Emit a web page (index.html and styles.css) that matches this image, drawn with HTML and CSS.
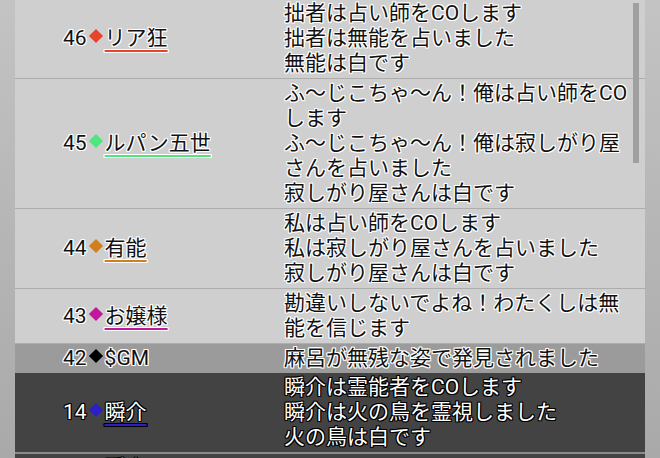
FILE: index.html
```html
<!DOCTYPE html>
<html>
<head>
    <meta http-equiv="Content-Type" content="text/html; charset=utf-8" />
    <title>ログ</title>
    <link rel="stylesheet" href="styles.css">
</head>
<body>
<div class="log">
    <div class="row">
        <div class="who"><span class="no">46</span><span class="mark red"></span><span class="name red">リア狂</span></div>
        <div class="msg">拙者は占い師をCOします<br>拙者は無能を占いました<br>無能は白です</div>
    </div>
    <div class="row">
        <div class="who"><span class="no">45</span><span class="mark green"></span><span class="name green">ルパン五世</span></div>
        <div class="msg">ふ〜じこちゃ〜ん！俺は占い師をCOします<br>ふ〜じこちゃ〜ん！俺は寂しがり屋さんを占いました<br>寂しがり屋さんは白です</div>
    </div>
    <div class="row">
        <div class="who"><span class="no">44</span><span class="mark orange"></span><span class="name orange">有能</span></div>
        <div class="msg">私は占い師をCOします<br>私は寂しがり屋さんを占いました<br>寂しがり屋さんは白です</div>
    </div>
    <div class="row">
        <div class="who"><span class="no">43</span><span class="mark pink"></span><span class="name pink">お嬢様</span></div>
        <div class="msg">勘違いしないでよね！わたくしは無能を信じます</div>
    </div>
    <div class="row gm">
        <div class="who"><span class="no">42</span><span class="mark black"></span><span class="plain">$GM</span></div>
        <div class="msg">麻呂が無残な姿で発見されました</div>
    </div>
    <div class="row dark">
        <div class="who"><span class="no">14</span><span class="mark blue"></span><span class="name blue">瞬介</span></div>
        <div class="msg">瞬介は霊能者をCOします<br>瞬介は火の鳥を霊視しました<br>火の鳥は白です</div>
    </div>
    <div class="row dark next">
        <div class="who"><span class="no">13</span><span class="mark blue"></span><span class="name blue">瞬介</span></div>
        <div class="msg"></div>
    </div>
</div>
<div class="scroll"></div>
</body>
</html>
```

FILE: styles.css
```css
* {
    margin: 0;
    padding: 0;
}
body {
    height: 458px;
    overflow: hidden;
    background: linear-gradient(#c3c3c3, #a9a9a9);
    font-family: Roboto, "Noto Sans CJK JP", sans-serif;
    font-size: 21px;
    line-height: 25px;
    color: #111;
}
/* 発言ログ */
.log {
    margin: -1px 15px 0 15px;
}
.row {
    display: flex;
    align-items: center;
    padding: 2px 5px 2px 0;
    background: #cfcfcf;
    border-bottom: 1px solid #adadad;
    text-shadow: 1px 1px 0 #fff, -1px -1px 0 #fff, 1px -1px 0 #fff, -1px 1px 0 #fff,
        0 1px 0 #fff, 0 -1px 0 #fff, 1px 0 0 #fff, -1px 0 0 #fff;
}
.row.gm {
    background: #9b9b9b;
    border-bottom: none;
}
.row.dark {
    background: #434343;
    color: #fff;
    border-bottom: 2px solid #8a8a8a;
    text-shadow: 1px 1px 0 #000, -1px -1px 0 #000, 1px -1px 0 #000, -1px 1px 0 #000,
        0 1px 0 #000, 0 -1px 0 #000, 1px 0 0 #000, -1px 0 0 #000;
}
.row.next {
    align-items: flex-start;
    height: 60px;
}
.who {
    width: 221px;
    flex: none;
    padding-left: 48px;
    white-space: nowrap;
}
.msg {
    width: 356px;
}
/* 役職の色マーク */
.mark {
    display: inline-block;
    width: 10px;
    height: 10px;
    margin: 0 4px 0 4px;
    vertical-align: 4px;
    transform: rotate(45deg);
}
.name {
    text-decoration: underline;
    text-decoration-thickness: 2px;
    text-underline-offset: 5px;
}
.mark.red {background: #e8442c;}
.mark.green {background: #4fe57f;}
.mark.orange {background: #cf7f1e;}
.mark.pink {background: #c0179b;}
.mark.black {background: #000;}
.mark.blue {background: #2c1fc4;}
.name.red {text-decoration-color: #e8442c;}
.name.green {text-decoration-color: #4fe57f;}
.name.orange {text-decoration-color: #cf7f1e;}
.name.pink {text-decoration-color: #c0179b;}
.name.blue {text-decoration-color: #2c1fc4;}
/* スクロールバー */
.scroll {
    position: absolute;
    left: 633px;
    top: 3px;
    width: 6px;
    height: 160px;
    background: #a0a0a0;
}
```
